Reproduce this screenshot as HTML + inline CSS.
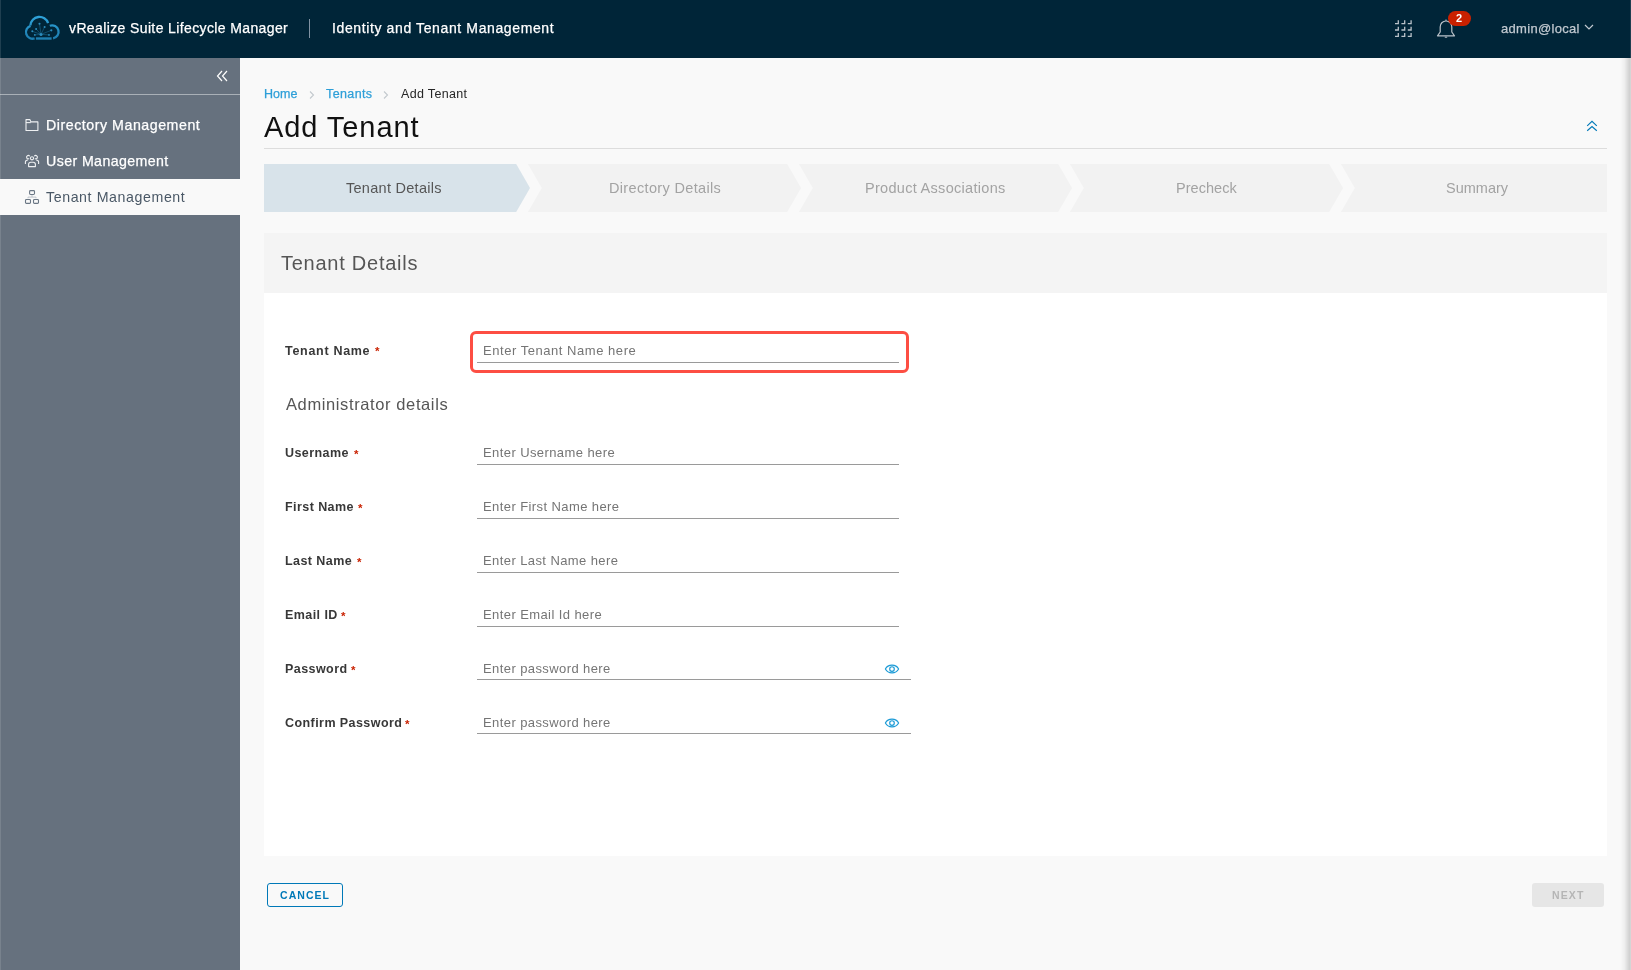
<!DOCTYPE html>
<html><head><meta charset="utf-8">
<style>
*{margin:0;padding:0;box-sizing:border-box}
html,body{width:1631px;height:970px;overflow:hidden;background:#f9f9f9;font-family:"Liberation Sans",sans-serif}
.t{position:absolute;white-space:nowrap;will-change:transform}
.abs{position:absolute}
</style></head><body>
<div class="abs" style="left:0;top:0;width:1631px;height:58px;background:#002538"></div>
<svg class="abs" style="left:0;top:0" width="70" height="58" viewBox="0 0 70 58">
<defs><linearGradient id="cg" x1="0" y1="15" x2="0" y2="40" gradientUnits="userSpaceOnUse"><stop offset="0" stop-color="#30a5dc"/><stop offset="1" stop-color="#1c7cae"/></linearGradient></defs>
<g fill="none" stroke="url(#cg)" stroke-width="2.3">
<path d="M34.6 38.4 A6.6 6.6 0 1 1 30.6 25.8"/>
<path d="M30.4 25.4 A9.1 9.1 0 0 1 48.1 23.1"/>
<path d="M49.8 25.8 A6.5 6.5 0 1 1 53.1 38.3"/>
</g>
<line x1="35.9" y1="38.5" x2="51.6" y2="38.5" stroke="#1f7fb0" stroke-width="2.4"/>
<g stroke="#2a86b5" stroke-width="0.6" opacity="0.7"><line x1="41" y1="34.4" x2="39.5" y2="23.8"/><line x1="41" y1="34.4" x2="44.6" y2="26.9"/><line x1="41" y1="34.4" x2="36.1" y2="29"/><line x1="41" y1="34.4" x2="32.3" y2="31.3"/><line x1="41" y1="34.4" x2="51.3" y2="30.3"/><line x1="41" y1="34.4" x2="34.8" y2="34.9"/><line x1="41" y1="34.4" x2="49" y2="34.9"/></g>
<g fill="#2b8cbd"><circle cx="41" cy="34.4" r="1.5"/><circle cx="39.5" cy="23.8" r="1.05"/><circle cx="44.6" cy="26.9" r="1"/><circle cx="36.1" cy="29" r="1"/><circle cx="32.3" cy="31.3" r="1"/><circle cx="51.3" cy="30.3" r="1.1"/><circle cx="34.8" cy="34.9" r="0.9"/><circle cx="49" cy="34.9" r="0.9"/></g>
</svg>
<div class="t" style="left:69px;top:20.75px;font-size:14px;line-height:14px;color:#fff;font-weight:normal;letter-spacing:0.38px;-webkit-text-stroke:0.25px #fff;">vRealize Suite Lifecycle Manager</div>
<div class="abs" style="left:309px;top:19px;width:1px;height:19px;background:#8193a3"></div>
<div class="t" style="left:331.5px;top:20.75px;font-size:14px;line-height:14px;color:#fff;font-weight:normal;letter-spacing:0.62px;-webkit-text-stroke:0.25px #fff;">Identity and Tenant Management</div>
<svg class="abs" style="left:0;top:0" width="1631" height="58"><path d="M1398.3 20.3 V23.6 H1395.0" fill="none" stroke="#b9c2c9" stroke-width="1.3"/><path d="M1404.7 20.3 V23.6 H1401.4" fill="none" stroke="#b9c2c9" stroke-width="1.3"/><path d="M1411.1 20.3 V23.6 H1407.8" fill="none" stroke="#b9c2c9" stroke-width="1.3"/><path d="M1398.3 26.7 V30.0 H1395.0" fill="none" stroke="#b9c2c9" stroke-width="1.3"/><path d="M1404.7 26.7 V30.0 H1401.4" fill="none" stroke="#b9c2c9" stroke-width="1.3"/><path d="M1411.1 26.7 V30.0 H1407.8" fill="none" stroke="#b9c2c9" stroke-width="1.3"/><path d="M1398.3 33.1 V36.4 H1395.0" fill="none" stroke="#b9c2c9" stroke-width="1.3"/><path d="M1404.7 33.1 V36.4 H1401.4" fill="none" stroke="#b9c2c9" stroke-width="1.3"/><path d="M1411.1 33.1 V36.4 H1407.8" fill="none" stroke="#b9c2c9" stroke-width="1.3"/></svg>
<svg class="abs" style="left:1434px;top:17px" width="24" height="24" viewBox="0 0 24 24">
<path d="M3.5 18.8 H20.5 L17.8 15 V10 A5.8 5.8 0 0 0 12 4 A5.8 5.8 0 0 0 6.2 10 V15 Z" fill="none" stroke="#b9c2c9" stroke-width="1.2" stroke-linejoin="round"/>
<line x1="10.8" y1="20.2" x2="13.2" y2="20.2" stroke="#b9c2c9" stroke-width="1"/>
<line x1="12" y1="2.5" x2="12" y2="4" stroke="#b9c2c9" stroke-width="1"/>
</svg>
<div class="abs" style="left:1448px;top:11px;width:23px;height:15px;border-radius:7.5px;background:#c92100"></div>
<div class="t" style="left:1455.8px;top:13.19px;font-size:11px;line-height:11px;color:#fff;font-weight:bold;letter-spacing:0px;">2</div>
<div class="t" style="left:1501px;top:21.80px;font-size:13px;line-height:13px;color:#c1c9d0;font-weight:normal;letter-spacing:0.31px;-webkit-text-stroke:0.25px #c1c9d0;">admin@local</div>
<svg class="abs" style="left:1584px;top:24px" width="10" height="7"><path d="M1 1 L5 5 L9 1" fill="none" stroke="#c1c9d0" stroke-width="1.2"/></svg>
<div class="abs" style="left:0;top:58px;width:240px;height:912px;background:#66717e"></div>
<div class="abs" style="left:0;top:94px;width:240px;height:1px;background:#a9b0b7"></div>
<svg class="abs" style="left:210px;top:66px" width="24" height="20" viewBox="0 0 24 20"><path d="M12 5 L7.5 10 L12 15 M17 5 L12.5 10 L17 15" fill="none" stroke="#fff" stroke-width="1.2"/></svg>
<div class="abs" style="left:0;top:179px;width:240px;height:36px;background:#f9f9f9"></div>
<svg class="abs" style="left:0;top:58px" width="240" height="160" viewBox="0 58 240 160">
<g fill="none" stroke="#eef0f2" stroke-width="1.1" stroke-linejoin="round">
<path d="M26 130.5 V119.6 H29.8 L31 121.9 H37.9 V130.5 Z"/><path d="M26 122.6 H30.8"/>
<circle cx="32" cy="158.3" r="1.6"/>
<path d="M28.6 166.6 V164.4 Q28.6 162.3 30.8 162.3 H33.2 Q35.4 162.3 35.4 164.4 V166.6 Z"/>
<path d="M29.7 156.2 A1.7 1.7 0 1 0 29.2 158.6"/><path d="M34.3 156.2 A1.7 1.7 0 1 1 34.8 158.6"/>
<path d="M25.4 163.9 V162.1 Q25.4 160.1 27.9 160"/><path d="M38.6 163.9 V162.1 Q38.6 160.1 36.1 160"/>
</g>
<g fill="none" stroke="#6b7785" stroke-width="1.1">
<rect x="29.6" y="190.6" width="4.9" height="3.9" rx="0.9"/>
<rect x="25.5" y="199.5" width="5" height="3.9" rx="0.9"/>
<rect x="33.5" y="199.5" width="5" height="3.9" rx="0.9"/>
</g>
<path d="M28 198.3 V197.1 H36 V198.3 M32 195 V197.1" fill="none" stroke="#b9c0c7" stroke-width="0.9"/>
</svg>
<div class="t" style="left:46px;top:117.78px;font-size:14.2px;line-height:14.2px;color:#fff;font-weight:normal;letter-spacing:0.54px;-webkit-text-stroke:0.25px #fff;">Directory Management</div>
<div class="t" style="left:46px;top:153.78px;font-size:14.2px;line-height:14.2px;color:#fff;font-weight:normal;letter-spacing:0.4px;-webkit-text-stroke:0.25px #fff;">User Management</div>
<div class="t" style="left:46px;top:189.78px;font-size:14.2px;line-height:14.2px;color:#4a5866;font-weight:normal;letter-spacing:0.59px;">Tenant Management</div>
<div class="t" style="left:264px;top:88.12px;font-size:12.5px;line-height:12.5px;color:#2e9fd8;font-weight:normal;letter-spacing:0px;-webkit-text-stroke:0.25px #2e9fd8;">Home</div>
<svg class="abs" style="left:307px;top:90px" width="10" height="10"><path d="M3 1.5 L6.5 5 L3 8.5" fill="none" stroke="#c3c9ce" stroke-width="1.1"/></svg>
<div class="t" style="left:326px;top:88.12px;font-size:12.5px;line-height:12.5px;color:#2e9fd8;font-weight:normal;letter-spacing:0.38px;-webkit-text-stroke:0.25px #2e9fd8;">Tenants</div>
<svg class="abs" style="left:381px;top:90px" width="10" height="10"><path d="M3 1.5 L6.5 5 L3 8.5" fill="none" stroke="#c3c9ce" stroke-width="1.1"/></svg>
<div class="t" style="left:401px;top:88.12px;font-size:12.5px;line-height:12.5px;color:#262626;font-weight:normal;letter-spacing:0.33px;">Add Tenant</div>
<div class="t" style="left:264px;top:112.75px;font-size:29px;line-height:29px;color:#111;font-weight:normal;letter-spacing:0.93px;">Add Tenant</div>
<svg class="abs" style="left:1582px;top:116px" width="20" height="20" viewBox="0 0 20 20"><path d="M5.2 9.8 L10 5.4 L14.8 9.8 M5.2 14.7 L10 10.5 L14.8 14.7" fill="none" stroke="#0079b8" stroke-width="1.15"/></svg>
<div class="abs" style="left:264px;top:148px;width:1343px;height:1px;background:#dddddd"></div>
<svg class="abs" style="left:0;top:0" width="1631" height="970"><polygon points="264.0,164.0 516.2,164.0 530.0,188.0 516.2,212.0 264.0,212.0" fill="#d8e3ea"/><polygon points="528.0,164.0 787.2,164.0 801.0,188.0 787.2,212.0 528.0,212.0 541.8,188.0" fill="#f2f2f2"/><polygon points="799.0,164.0 1058.2,164.0 1072.0,188.0 1058.2,212.0 799.0,212.0 812.8,188.0" fill="#f2f2f2"/><polygon points="1070.0,164.0 1329.2,164.0 1343.0,188.0 1329.2,212.0 1070.0,212.0 1083.8,188.0" fill="#f2f2f2"/><polygon points="1341.0,164.0 1607.0,164.0 1607.0,212.0 1341.0,212.0 1354.8,188.0" fill="#f2f2f2"/></svg>
<div class="t" style="left:346px;top:180.73px;font-size:14.5px;line-height:14.5px;color:#565656;font-weight:normal;letter-spacing:0.28px;">Tenant Details</div>
<div class="t" style="left:609px;top:180.73px;font-size:14.5px;line-height:14.5px;color:#a3a3a3;font-weight:normal;letter-spacing:0.34px;">Directory Details</div>
<div class="t" style="left:865px;top:180.73px;font-size:14.5px;line-height:14.5px;color:#a3a3a3;font-weight:normal;letter-spacing:0.3px;">Product Associations</div>
<div class="t" style="left:1175.5px;top:180.73px;font-size:14.5px;line-height:14.5px;color:#a3a3a3;font-weight:normal;letter-spacing:0.04px;">Precheck</div>
<div class="t" style="left:1446px;top:180.73px;font-size:14.5px;line-height:14.5px;color:#a3a3a3;font-weight:normal;letter-spacing:0.0px;">Summary</div>
<div class="abs" style="left:264px;top:233px;width:1343px;height:60px;background:#f4f4f4"></div>
<div class="abs" style="left:264px;top:293px;width:1343px;height:563px;background:#fff"></div>
<div class="t" style="left:280.5px;top:253.07px;font-size:20px;line-height:20px;color:#565656;font-weight:normal;letter-spacing:0.75px;">Tenant Details</div>
<div class="t" style="left:285px;top:344.92px;font-size:12.5px;line-height:12.5px;color:#383838;font-weight:bold;letter-spacing:0.7px;">Tenant Name</div>
<div class="t" style="left:374.7px;top:346.27px;font-size:11.5px;line-height:11.5px;color:#c92100;font-weight:bold;letter-spacing:0px;">*</div>
<div class="abs" style="left:470px;top:331px;width:439px;height:42px;border:3px solid #fd4e43;border-radius:6px"></div>
<div class="abs" style="left:477px;top:362px;width:422px;height:1px;background:#9a9a9a"></div>
<div class="t" style="left:483px;top:344.00px;font-size:13px;line-height:13px;color:#757575;font-weight:normal;letter-spacing:0.54px;">Enter Tenant Name here</div>
<div class="t" style="left:285.5px;top:395.93px;font-size:16.5px;line-height:16.5px;color:#565656;font-weight:normal;letter-spacing:0.61px;">Administrator details</div>
<div class="t" style="left:285px;top:447.42px;font-size:12.5px;line-height:12.5px;color:#383838;font-weight:bold;letter-spacing:0.43px;">Username</div>
<div class="t" style="left:353.7px;top:448.57px;font-size:11.5px;line-height:11.5px;color:#c92100;font-weight:bold;letter-spacing:0px;">*</div>
<div class="abs" style="left:477px;top:464px;width:422px;height:1px;background:#9a9a9a"></div>
<div class="t" style="left:483px;top:446.00px;font-size:13px;line-height:13px;color:#757575;font-weight:normal;letter-spacing:0.41px;">Enter Username here</div>
<div class="t" style="left:285px;top:501.42px;font-size:12.5px;line-height:12.5px;color:#383838;font-weight:bold;letter-spacing:0.43px;">First Name</div>
<div class="t" style="left:358.09999999999997px;top:502.57px;font-size:11.5px;line-height:11.5px;color:#c92100;font-weight:bold;letter-spacing:0px;">*</div>
<div class="abs" style="left:477px;top:518px;width:422px;height:1px;background:#9a9a9a"></div>
<div class="t" style="left:483px;top:500.00px;font-size:13px;line-height:13px;color:#757575;font-weight:normal;letter-spacing:0.41px;">Enter First Name here</div>
<div class="t" style="left:285px;top:555.42px;font-size:12.5px;line-height:12.5px;color:#383838;font-weight:bold;letter-spacing:0.43px;">Last Name</div>
<div class="t" style="left:356.7px;top:556.57px;font-size:11.5px;line-height:11.5px;color:#c92100;font-weight:bold;letter-spacing:0px;">*</div>
<div class="abs" style="left:477px;top:572px;width:422px;height:1px;background:#9a9a9a"></div>
<div class="t" style="left:483px;top:554.00px;font-size:13px;line-height:13px;color:#757575;font-weight:normal;letter-spacing:0.41px;">Enter Last Name here</div>
<div class="t" style="left:285px;top:609.42px;font-size:12.5px;line-height:12.5px;color:#383838;font-weight:bold;letter-spacing:0.43px;">Email ID</div>
<div class="t" style="left:341.0px;top:610.57px;font-size:11.5px;line-height:11.5px;color:#c92100;font-weight:bold;letter-spacing:0px;">*</div>
<div class="abs" style="left:477px;top:626px;width:422px;height:1px;background:#9a9a9a"></div>
<div class="t" style="left:483px;top:608.00px;font-size:13px;line-height:13px;color:#757575;font-weight:normal;letter-spacing:0.41px;">Enter Email Id here</div>
<div class="t" style="left:285px;top:663.42px;font-size:12.5px;line-height:12.5px;color:#383838;font-weight:bold;letter-spacing:0.43px;">Password</div>
<div class="t" style="left:350.7px;top:664.57px;font-size:11.5px;line-height:11.5px;color:#c92100;font-weight:bold;letter-spacing:0px;">*</div>
<div class="abs" style="left:477px;top:679px;width:434px;height:1px;background:#9a9a9a"></div>
<div class="t" style="left:483px;top:662.00px;font-size:13px;line-height:13px;color:#757575;font-weight:normal;letter-spacing:0.41px;">Enter password here</div>
<svg class="abs" style="left:884px;top:663px" width="16" height="12" viewBox="0 0 16 12"><path d="M1.4 6 C4 0.9 12 0.9 14.6 6 C12 11.1 4 11.1 1.4 6 Z" fill="none" stroke="#1a9ad6" stroke-width="1.15"/><circle cx="8" cy="6" r="2.3" fill="none" stroke="#1a9ad6" stroke-width="1.15"/></svg>
<div class="t" style="left:285px;top:717.42px;font-size:12.5px;line-height:12.5px;color:#383838;font-weight:bold;letter-spacing:0.43px;">Confirm Password</div>
<div class="t" style="left:404.7px;top:718.57px;font-size:11.5px;line-height:11.5px;color:#c92100;font-weight:bold;letter-spacing:0px;">*</div>
<div class="abs" style="left:477px;top:733px;width:434px;height:1px;background:#9a9a9a"></div>
<div class="t" style="left:483px;top:716.00px;font-size:13px;line-height:13px;color:#757575;font-weight:normal;letter-spacing:0.41px;">Enter password here</div>
<svg class="abs" style="left:884px;top:717px" width="16" height="12" viewBox="0 0 16 12"><path d="M1.4 6 C4 0.9 12 0.9 14.6 6 C12 11.1 4 11.1 1.4 6 Z" fill="none" stroke="#1a9ad6" stroke-width="1.15"/><circle cx="8" cy="6" r="2.3" fill="none" stroke="#1a9ad6" stroke-width="1.15"/></svg>
<div class="abs" style="left:267px;top:883px;width:76px;height:24px;border:1.2px solid #0079b8;border-radius:3px"></div>
<div class="t" style="left:280px;top:889.91px;font-size:10.5px;line-height:10.5px;color:#0079b8;font-weight:bold;letter-spacing:1.05px;">CANCEL</div>
<div class="abs" style="left:1532px;top:883px;width:72px;height:24px;background:#e6e6e6;border-radius:3px"></div>
<div class="t" style="left:1551.5px;top:889.91px;font-size:10.5px;line-height:10.5px;color:#b5b5b5;font-weight:bold;letter-spacing:1.1px;">NEXT</div>
<div class="abs" style="left:1620px;top:58px;width:11px;height:912px;background:linear-gradient(to right,rgba(0,0,0,0),rgba(0,0,0,0.04) 40%,rgba(0,0,0,0.17) 90%,rgba(0,0,0,0.12))"></div><div class="abs" style="left:1630px;top:0;width:1px;height:58px;background:rgba(255,255,255,0.12)"></div>
<div class="abs" style="left:0;top:0;width:1px;height:970px;background:rgba(255,255,255,0.12)"></div>
</body></html>
